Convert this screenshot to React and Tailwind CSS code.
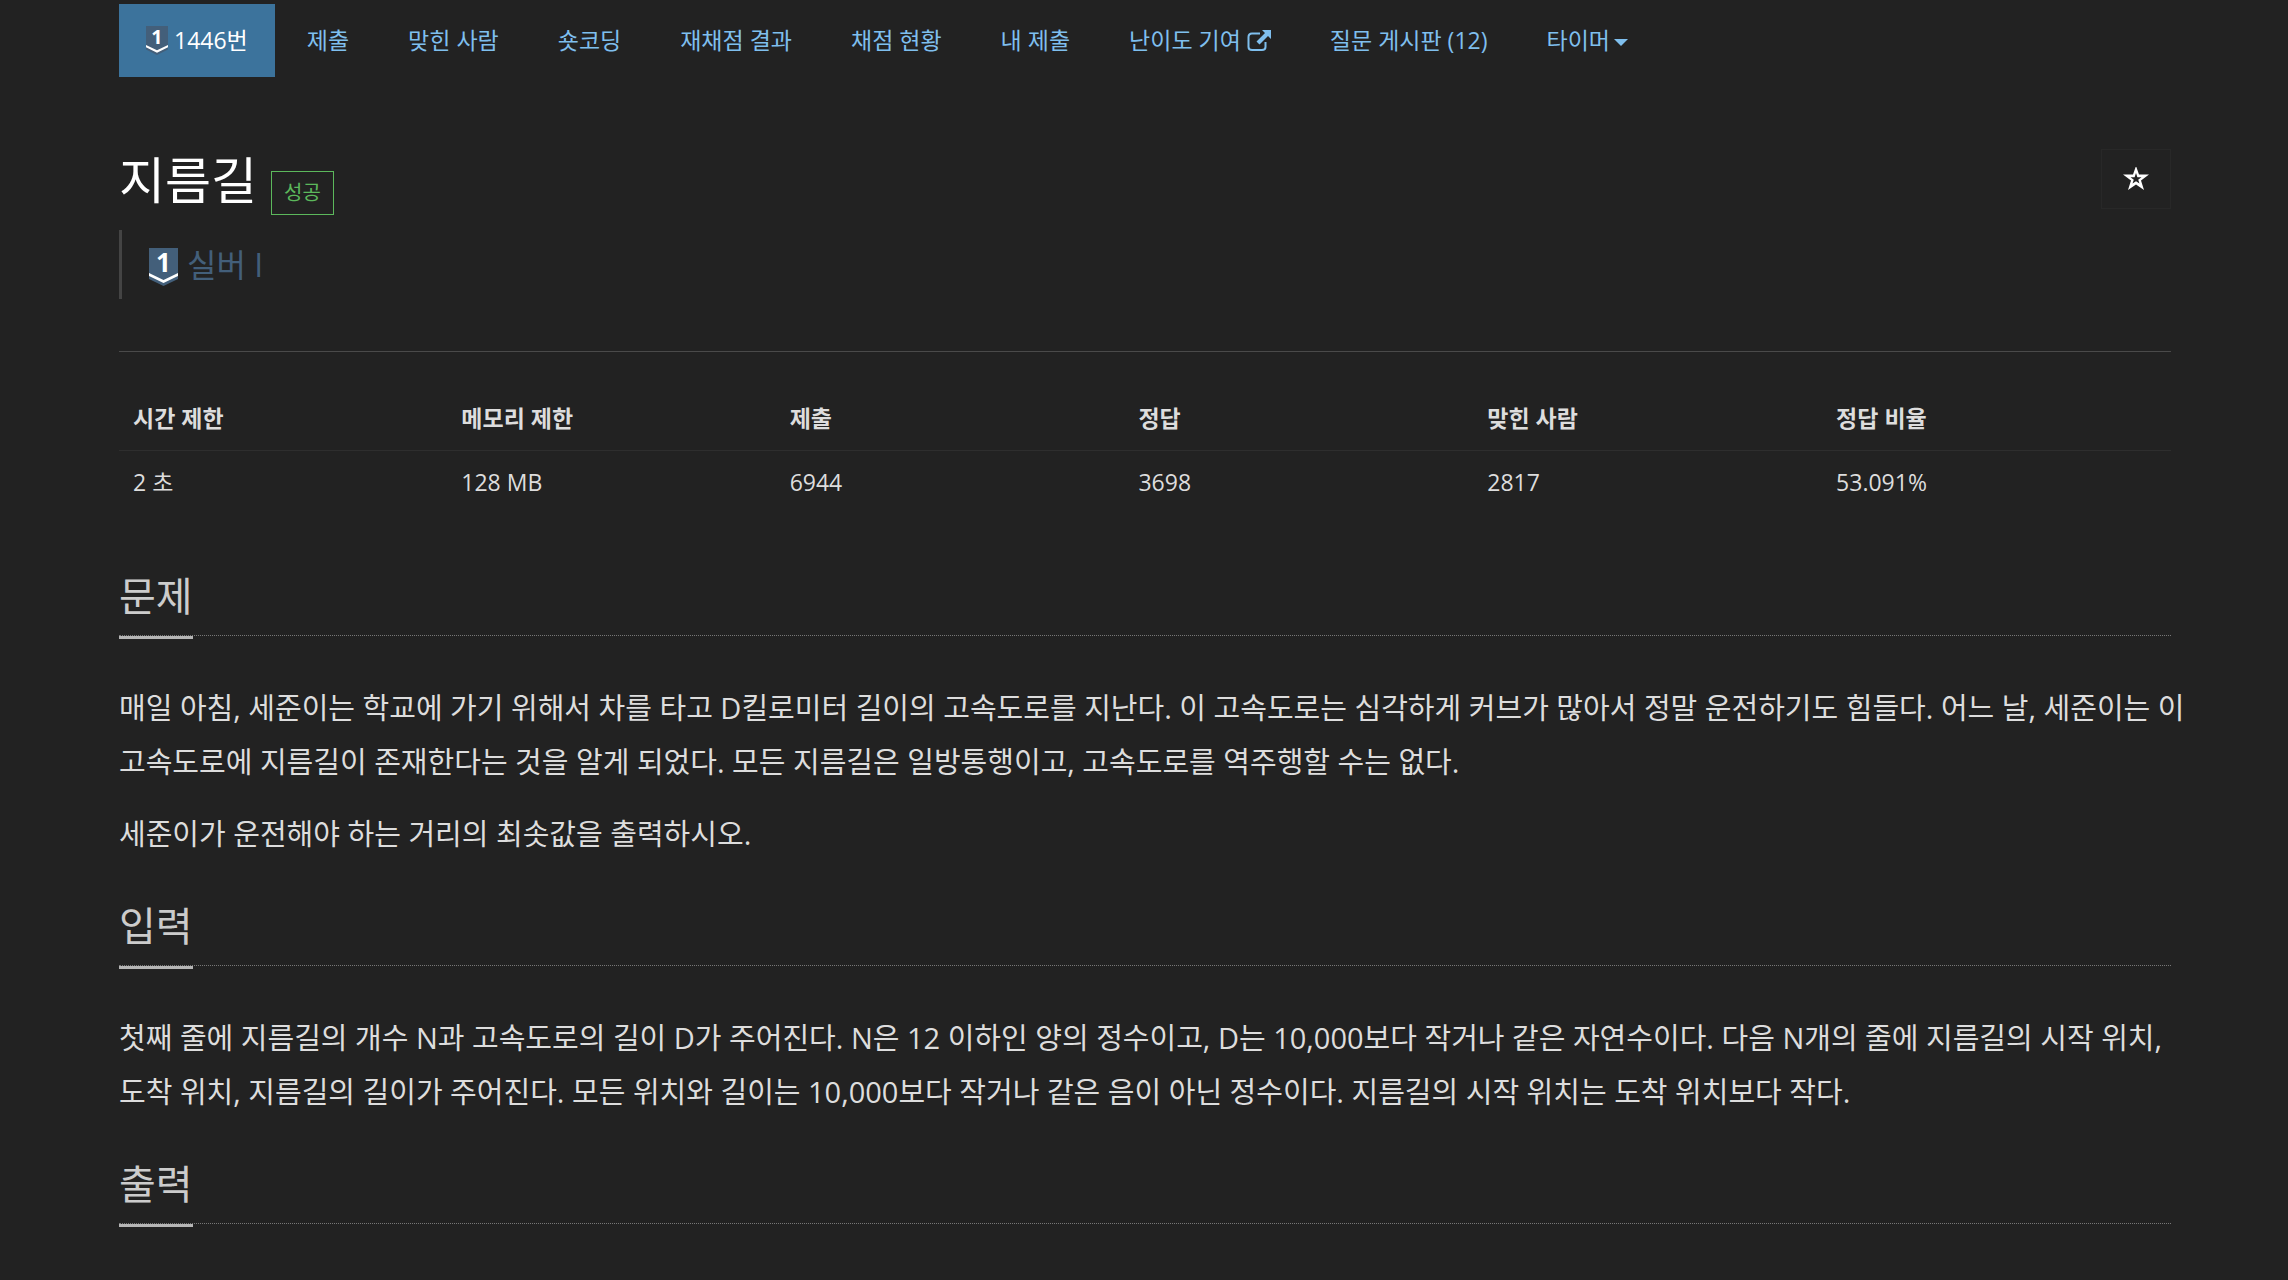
const tabs = [
  { label: "제출" },
  { label: "맞힌 사람" },
  { label: "숏코딩" },
  { label: "재채점 결과" },
  { label: "채점 현황" },
  { label: "내 제출" },
  { label: "난이도 기여", external: true },
  { label: "질문 게시판 (12)" },
]

const stats = [
  { name: "시간 제한", value: "2 초", width: "w-[16%]" },
  { name: "메모리 제한", value: "128 MB", width: "w-[16%]" },
  { name: "제출", value: "6944", width: "w-[17%]" },
  { name: "정답", value: "3698", width: "w-[17%]" },
  { name: "맞힌 사람", value: "2817", width: "w-[17%]" },
  { name: "정답 비율", value: "53.091%", width: "w-[17%]" },
]

const TierBadge = ({ className }) => (
  <svg viewBox="0 0 29 38" className={className} overflow="visible" aria-hidden="true">
    <path d="M0 0H29V31L14.5 38L0 31Z" fill="#435f7a" />
    <path d="M0 25L14.5 32L29 25V28L14.5 35L0 28Z" fill="#fff" />
    <text x="14.5" y="24" textAnchor="middle" fontSize="26" fontWeight="700" fill="#fff">
      1
    </text>
  </svg>
)

const ExternalIcon = () => (
  <svg viewBox="0 0 24 22" className="h-[22px] w-6" aria-hidden="true">
    <path d="M13 3.5H5Q1.5 3.5 1.5 7V17Q1.5 20 5 20H15Q18.5 20 18.5 17V12" fill="none" stroke="currentColor" strokeWidth="2" />
    <path d="M15 0H24V9L21 6L12.5 14.5L9.5 11.5L18 3Z" fill="currentColor" />
  </svg>
)

const StarIcon = () => (
  <svg viewBox="0 1 26 24" className="h-6 w-[26px]" aria-hidden="true">
    <path
      d="M13 0L16 8.5H26L18 14.5L21 24L13 18.5L5 24L8 14.5L0 8.5H10ZM13 7L11.6 11.2H7.5L10.8 13.8L9.5 17.6L13 15.3L16.5 17.6L15.2 13.8L18.5 11.2H14.4Z"
      fill="currentColor"
      fillRule="evenodd"
    />
  </svg>
)

const Caret = () => (
  <svg viewBox="0 0 14 7" className="mt-1 h-[7px] w-[14px]" aria-hidden="true">
    <path d="M0 0H14L7 7Z" fill="currentColor" />
  </svg>
)

const Section = ({ title, children }) => (
  <section>
    <div className="mb-[45px] flex border-b border-dotted border-[#777]">
      <h2 className="-mb-1 border-b-3 border-[#b5b5b5] pb-3 text-[40px] leading-[56px] text-[#ccc]">{title}</h2>
    </div>
    <div className="-mr-4 space-y-[18px] text-[29px] leading-[54px] break-keep text-[#ddd]">{children}</div>
  </section>
)

const App = () => {
  return (
    <div className="min-h-screen bg-[#222] font-['Open_Sans','Noto_Sans_CJK_KR',sans-serif] text-[#ddd]">
      <div className="pt-1 pr-[117px] pl-[119px]">
        <nav className="flex flex-wrap gap-[5px] text-[23px] leading-[33px] text-[#7fbfee]">
          <a href="#problem" className="flex items-center gap-[6px] bg-[#3c739c] px-[27px] py-5 text-white">
            <TierBadge className="h-[29px] w-[22px]" />
            1446번
          </a>
          {tabs.map((tab) => (
            <a key={tab.label} href="#tab" className="flex items-center gap-[6px] px-[27px] py-5">
              {tab.label}
              {tab.external && <ExternalIcon />}
            </a>
          ))}
          <button type="button" className="flex items-center gap-1 px-[27px] py-5">
            타이머
            <Caret />
          </button>
        </nav>

        <header className="mt-[72px] flex items-start justify-between">
          <div className="flex items-end gap-[14px]">
            <h1 className="pb-1 text-[50px] leading-[62px] text-white">지름길</h1>
            <span className="border border-[#5cb85c] px-3 py-[7px] text-[20px] leading-7 text-[#5cb85c]">성공</span>
          </div>
          <button
            type="button"
            aria-label="즐겨찾기"
            className="flex h-[60px] w-[70px] items-center justify-center border border-[#282828] text-white"
          >
            <StarIcon />
          </button>
        </header>

        <blockquote className="mt-[15px] flex items-center gap-[9px] border-l-3 border-[#444] py-[10px] pl-[27px] text-[32px] leading-[49px] text-[#435f7a]">
          <TierBadge className="mt-1 h-[38px] w-[29px]" />
          실버 I
        </blockquote>

        <hr className="mt-[52px] border-[#4a4a4a]" />

        <table className="mt-[34px] w-full table-fixed text-left text-[23px] leading-8">
          <thead>
            <tr className="border-b border-[#2e2e2e]">
              {stats.map((stat) => (
                <th key={stat.name} className={`${stat.width} px-[14px] py-4 font-bold`}>
                  {stat.name}
                </th>
              ))}
            </tr>
          </thead>
          <tbody>
            <tr>
              {stats.map((stat) => (
                <td key={stat.name} className="px-[14px] py-[15px]">
                  {stat.value}
                </td>
              ))}
            </tr>
          </tbody>
        </table>

        <main id="problem" className="mt-[55px] space-y-[37px]">
          <Section title="문제">
            <p>
              매일 아침, 세준이는 학교에 가기 위해서 차를 타고 D킬로미터 길이의 고속도로를 지난다. 이 고속도로는 심각하게 커브가 많아서 정말 운전하기도 힘들다. 어느 날, 세준이는 이 고속도로에 지름길이 존재한다는 것을 알게 되었다. 모든 지름길은 일방통행이고, 고속도로를 역주행할 수는 없다.
            </p>
            <p>세준이가 운전해야 하는 거리의 최솟값을 출력하시오.</p>
          </Section>
          <Section title="입력">
            <p>
              첫째 줄에 지름길의 개수 N과 고속도로의 길이 D가 주어진다. N은 12 이하인 양의 정수이고, D는 10,000보다 작거나 같은 자연수이다. 다음 N개의 줄에 지름길의 시작 위치, 도착 위치, 지름길의 길이가 주어진다. 모든 위치와 길이는 10,000보다 작거나 같은 음이 아닌 정수이다. 지름길의 시작 위치는 도착 위치보다 작다.
            </p>
          </Section>
          <Section title="출력" />
        </main>
      </div>
    </div>
  )
}

export default App
